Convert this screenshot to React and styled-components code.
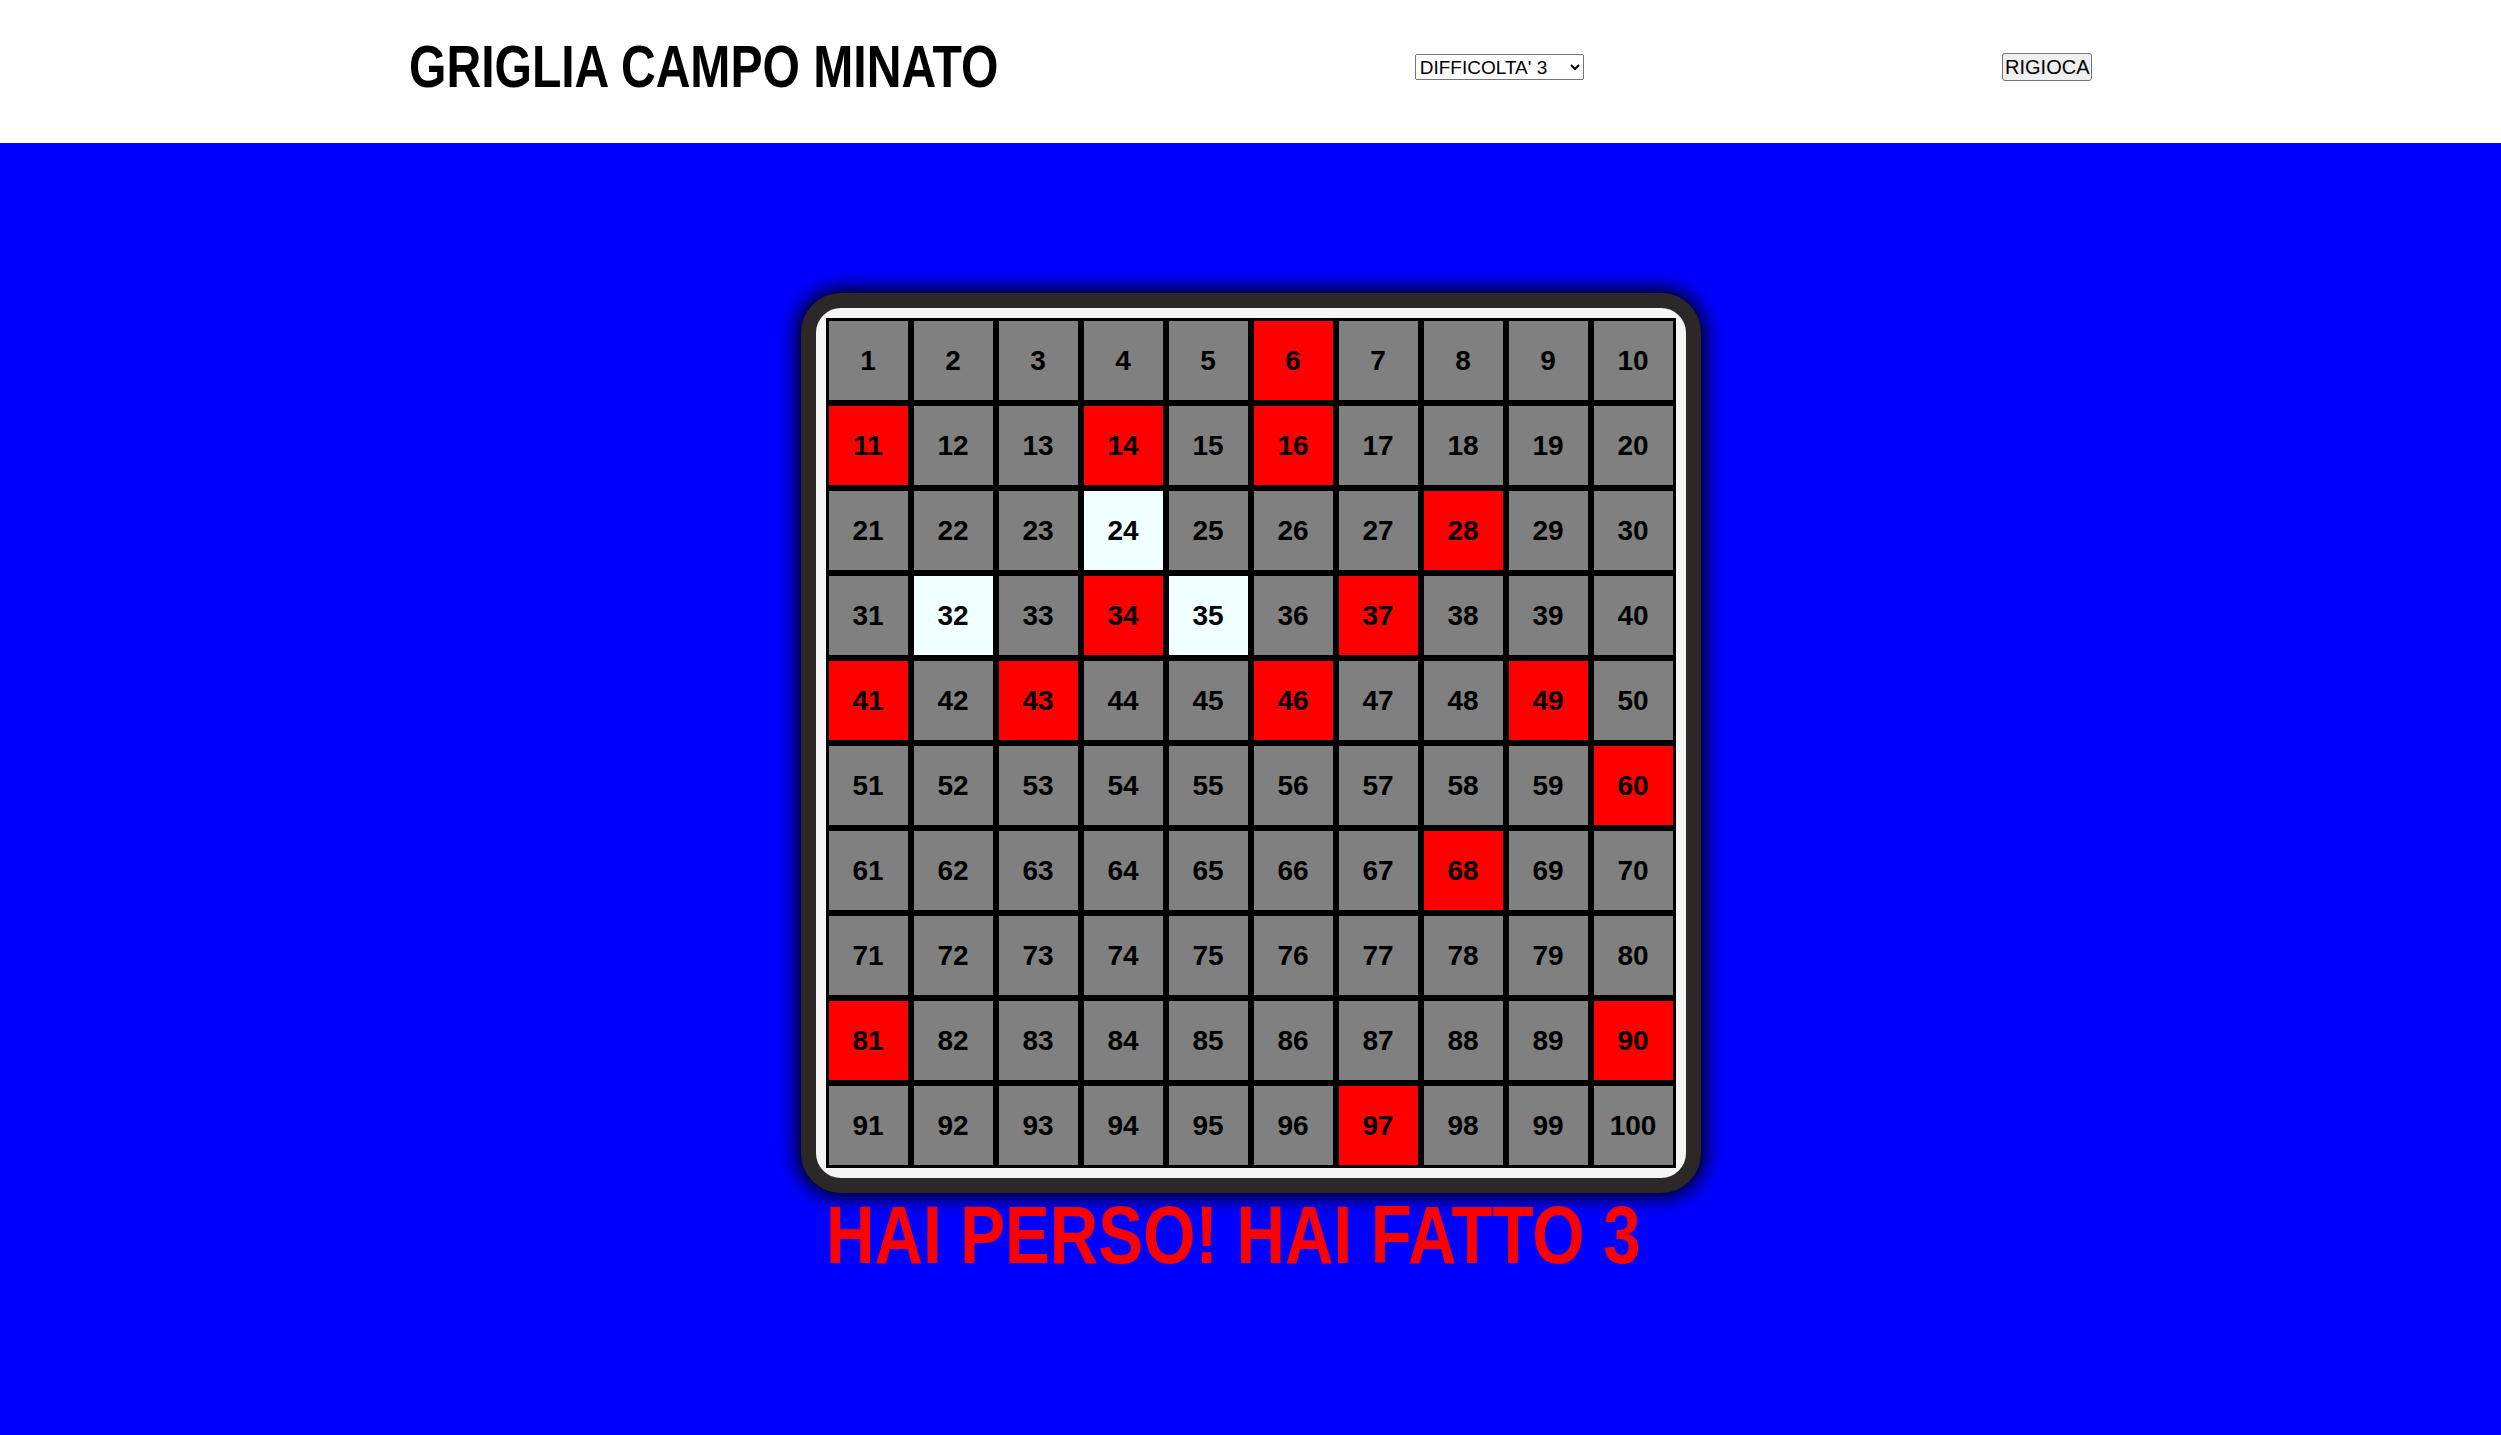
import React from 'react';
import styled, { createGlobalStyle } from 'styled-components';

const GlobalStyle = createGlobalStyle`
  html, body {
    margin: 0;
    padding: 0;
    background-color: blue;
    font-family: 'Liberation Sans', Arial, sans-serif;
  }
`;

const Header = styled.header`
  height: 143px;
  background-color: white;
`;

const HeaderInner = styled.div`
  width: 1684px;
  height: 100%;
  margin: 0 auto;
  padding-bottom: 9px;
  box-sizing: border-box;
  display: flex;
  justify-content: space-between;
  align-items: center;
`;

// la larghezza di layout corrisponde al testo stretto
const TitleBox = styled.div`
  width: 588px;
  white-space: nowrap;
`;

const Title = styled.h1`
  display: inline-block;
  margin: 0;
  font-size: 59px;
  font-weight: bold;
  color: black;
  transform: scaleX(0.815);
  transform-origin: left center;
`;

const Select = styled.select`
  font-family: 'Liberation Sans', Arial, sans-serif;
  font-size: 19px;
  width: 169px;
  height: 26px;
  color: black;
`;

const Button = styled.button`
  font-family: 'Liberation Sans', Arial, sans-serif;
  font-size: 20px;
  height: 28px;
  padding: 1px 2px;
  color: black;
  background-color: #efefef;
  border: 1px solid #767676;
  border-radius: 3px;
`;

const Main = styled.main`
  background-color: blue;
  min-height: calc(100vh - 143px);
  padding-top: 150px;
  box-sizing: border-box;
`;

const Wrap = styled.div`
  width: 900px;
  margin: 0 auto;
`;

const Frame = styled.div`
  width: 850px;
  padding: 10px;
  border: 15px solid #2c2828;
  border-radius: 40px;
  background-color: #f5f5f5;
  box-shadow: 0 0 20px 4px #000;
`;

const Grid = styled.div`
  display: grid;
  grid-template-columns: repeat(10, 85px);
  grid-auto-rows: 85px;
`;

const cellColors = {
  hidden: '#808080',
  bomb: '#ff0000',
  safe: '#f0ffff'
};

const Cell = styled.div`
  box-sizing: border-box;
  border: 3px solid black;
  background-color: ${(p) => cellColors[p.$state]};
  display: flex;
  justify-content: center;
  align-items: center;
  font-size: 28px;
  font-weight: bold;
  color: black;
`;

const Message = styled.h2`
  margin: -4px 0 0 25px;
  display: inline-block;
  white-space: nowrap;
  font-size: 81px;
  line-height: normal;
  font-weight: bold;
  color: #ff0000;
  transform: scaleX(0.829);
  transform-origin: left center;
`;

const bombs = [6, 11, 14, 16, 28, 34, 37, 41, 43, 46, 49, 60, 68, 81, 90, 97];
const clicked = [24, 32, 35];

const App = () => {
  const cells = Array.from({ length: 100 }, (_, i) => i + 1);

  const getState = (n) => {
    if (bombs.includes(n)) return 'bomb';
    if (clicked.includes(n)) return 'safe';
    return 'hidden';
  };

  return (
    <>
      <GlobalStyle />
      <Header>
        <HeaderInner>
          <TitleBox>
            <Title>GRIGLIA CAMPO MINATO</Title>
          </TitleBox>
          <Select defaultValue="3">
            <option value="1">DIFFICOLTA' 1</option>
            <option value="2">DIFFICOLTA' 2</option>
            <option value="3">DIFFICOLTA' 3</option>
          </Select>
          <Button>RIGIOCA</Button>
        </HeaderInner>
      </Header>
      <Main>
        <Wrap>
          <Frame>
            <Grid>
              {cells.map((n) => (
                <Cell key={n} $state={getState(n)}>
                  {n}
                </Cell>
              ))}
            </Grid>
          </Frame>
          <Message>HAI PERSO! HAI FATTO 3</Message>
        </Wrap>
      </Main>
    </>
  );
};

export default App;
